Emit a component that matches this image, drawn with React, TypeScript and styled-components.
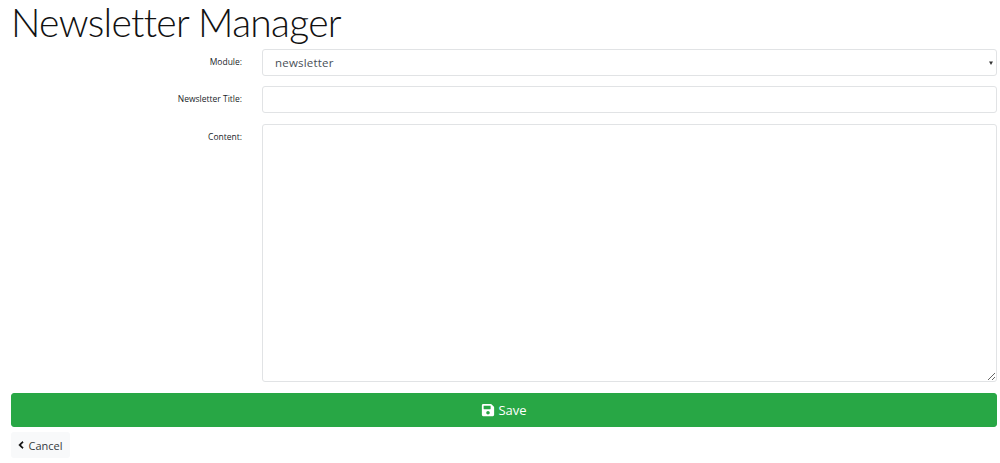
import styled, { createGlobalStyle } from "styled-components"
import { FaSave, FaChevronLeft } from "react-icons/fa"

const GlobalStyle = createGlobalStyle`
html, body {
  margin: 0;
  padding: 0;
  background: #fff;
}
body {
  font-family: "Open Sans", "Noto Sans", sans-serif;
  color: #212529;
}
`

const Page = styled.div`
padding: 0 3px 0 11px;
display: flex;
flex-direction: column;
`

const Titulo = styled.h1`
margin: 0 0 4px;
height: 45px;
font-family: Lato, "Open Sans", sans-serif;
font-weight: 300;
font-size: 39px;
letter-spacing: -0.7px;
line-height: 44px;
color: #111;
white-space: nowrap;
`

const Row = styled.div<{ $gap: number }>`
display: grid;
grid-template-columns: 231px 1fr;
column-gap: 20px;
margin-bottom: ${(p) => p.$gap}px;
`

const Label = styled.label`
text-align: right;
font-size: 8.5px;
line-height: 12px;
padding-top: 7px;
color: #212529;
`

const fieldBorder = `
box-sizing: border-box;
width: 100%;
border: 1px solid #e1e3e5;
border-radius: 3px;
background: #fff;
`

const SelectBox = styled.div`
${fieldBorder}
height: 27px;
display: flex;
align-items: center;
justify-content: space-between;
padding: 0 2px 0 12px;
font-size: 11.5px;
letter-spacing: 0.2px;
color: #495057;
`

const Caret = styled.svg`
width: 4px;
height: 4px;
margin-right: 1px;
`

const Input = styled.input`
${fieldBorder}
height: 27px;
display: block;
outline: none;
`

const TextArea = styled.textarea`
${fieldBorder}
height: 258px;
display: block;
outline: none;
resize: vertical;
`

const SaveButton = styled.button`
box-sizing: border-box;
width: 100%;
height: 34px;
margin: 1px 0 5px;
border: 1px solid #28a745;
border-radius: 3px;
background: #28a745;
color: #fff;
font-family: inherit;
font-size: 13px;
display: flex;
align-items: center;
justify-content: center;
gap: 3px;
svg {
  width: 14px;
  height: 14px;
}
`

const CancelButton = styled.button`
box-sizing: border-box;
align-self: flex-start;
width: 59px;
height: 26px;
border: none;
border-radius: 3px;
background: #f8f9fa;
color: #343a40;
font-family: inherit;
font-size: 11px;
display: flex;
align-items: center;
justify-content: center;
gap: 4px;
padding: 0;
svg {
  width: 6px;
  height: 8px;
  color: #000;
  stroke: currentColor;
  stroke-width: 40px;
}
`

export default function App() {
    return (
        <Page>
            <GlobalStyle />
            <Titulo>Newsletter Manager</Titulo>
            <Row $gap={10}>
                <Label>Module:</Label>
                <SelectBox>
                    newsletter
                    <Caret viewBox="0 0 8 8"><path d="M0 1h8L4 8z" fill="#333" /></Caret>
                </SelectBox>
            </Row>
            <Row $gap={11}>
                <Label>Newsletter Title:</Label>
                <Input />
            </Row>
            <Row $gap={10}>
                <Label>Content:</Label>
                <TextArea />
            </Row>
            <SaveButton><FaSave /> Save</SaveButton>
            <CancelButton><FaChevronLeft /> Cancel</CancelButton>
        </Page>
    )
}
